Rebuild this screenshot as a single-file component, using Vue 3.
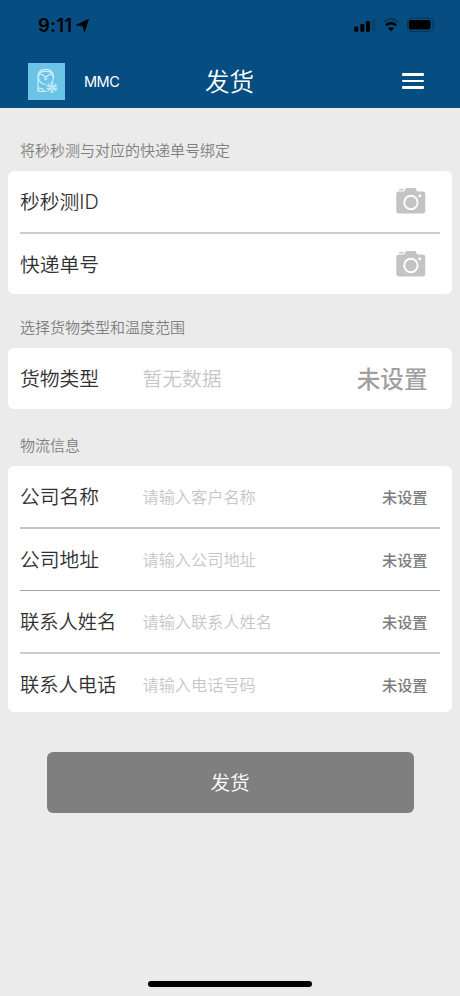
<script setup>
const scanRows = ['秒秒测ID', '快递单号']
const infoRows = [
  { label: '公司名称', hint: '请输入客户名称' },
  { label: '公司地址', hint: '请输入公司地址' },
  { label: '联系人姓名', hint: '请输入联系人姓名', long: true },
  { label: '联系人电话', hint: '请输入电话号码', long: true },
]
</script>

<template>
  <div class="screen">
    <header class="header">
      <div class="status">
        <div class="clock">
          <span class="time">9:11</span>
          <svg class="arrow" width="13" height="13" viewBox="0 0 13 13"><path d="M12.600 .3 8.600 12.700 6.700 6.900 .2 6Z" stroke="#000" stroke-width=".6" stroke-linejoin="round" /></svg>
        </div>
        <svg width="84" height="18" viewBox="0 0 84 18">
          <rect x="0.300" y="10.500" width="4" height="5.200" rx="1.200" />
          <rect x="6.300" y="8" width="4" height="7.700" rx="1" />
          <rect x="12" y="5" width="4" height="10.700" rx="1" />
          <rect x="18" y="2" width="3.600" height="13.700" rx="1" opacity=".13" />
          <path d="M29.600 6.200Q37 -.2 44.400 6.200" fill="none" stroke="#000" stroke-width="2.400" opacity=".25" />
          <path d="M31.900 9.300Q37 4.800 42.100 9.300" fill="none" stroke="#000" stroke-width="2.600" />
          <path d="M34 12.300Q37 10 40 12.300L37 15.300Z" />
          <rect x="53.500" y="2.200" width="25.500" height="13.300" rx="3.600" fill="none" stroke="#000" opacity=".3" />
          <rect x="54.800" y="4" width="21.800" height="9.500" rx="2" />
          <path d="M80.500 6.200Q82.300 8.700 80.500 11.200Z" opacity=".35" />
        </svg>
      </div>
      <div class="nav">
        <div class="brand">
          <svg class="logo" width="37" height="37" viewBox="0 0 37 37">
            <rect width="37" height="37" fill="#6bc4e5" />
            <g fill="none" stroke="#cdf0f8" stroke-width="1.200" stroke-linecap="round" stroke-linejoin="round">
              <path d="M10 27V13Q10.500 6.300 17.500 6.300 25 6.300 25.500 13.500 25.500 16.500 24.500 18.500" />
              <path d="M10.500 14Q11 10.500 14 11.500 16 12.500 17.700 14.500 19.500 12.500 21.500 11.500 24.500 10.500 25 14" />
              <path d="M11.500 10.500Q13.500 8 17.500 8.500 22 8 24 10.500M16.700 15.500 17.700 17 18.700 15.500" />
              <path d="M10.500 15Q11.500 20.500 17.500 21.500M10 26.500Q10 28.500 12.500 28.500H18.500M10.500 25.200Q14 24.500 16.500 28" />
              <path stroke-width="1" d="M23.900 19.300V29.700M19.400 21.900 28.400 27.100M19.400 27.100 28.400 21.900" />
              <circle cx="23.900" cy="24.500" r="2.600" stroke-width=".8" />
              <path stroke-width=".9" d="M22.300 19.800 23.900 21.200 25.500 19.800M22.300 29.200 23.900 27.800 25.500 29.200M19 23.500 21 23.200 20.800 21M28.800 23.500 26.800 23.200 27 21M19 25.500 21 25.800 20.800 28M28.800 25.500 26.800 25.800 27 28" />
            </g>
          </svg>
          <span class="name">MMC</span>
        </div>
        <h1 class="title">发货</h1>
        <div class="menu"><i></i><i></i><i></i></div>
      </div>
    </header>

    <main class="body">
      <p class="caption">将秒秒测与对应的快递单号绑定</p>
      <section class="card">
        <div v-for="label in scanRows" :key="label" class="row scan">
          <span class="label">{{ label }}</span>
          <svg class="camera" width="30" height="26" viewBox="0 0 30 26">
            <path fill="#c3c3c3" d="M3 1.700Q3 1 4 1H7Q8 1 8 1.700V2.200H3ZM3 3.500H7.500Q8.500 3.500 9 2L9.400 1Q9.800 0 11 0H18.500Q19.700 0 20 1L20.400 2.200Q20.800 3.500 22.200 3.500H26.500Q29.300 3.500 29.300 6.200V22.800Q29.300 25.500 26.500 25.500H3Q.3 25.500 .3 22.800V6.200Q.3 3.500 3 3.500Z" />
            <circle cx="14.900" cy="14.500" r="6.700" fill="none" stroke="#fff" stroke-width="1.900" />
            <circle cx="23.800" cy="7.800" r="1.500" fill="#fff" />
          </svg>
        </div>
      </section>

      <p class="caption">选择货物类型和温度范围</p>
      <section class="card">
        <div class="row">
          <span class="label">货物类型</span>
          <span class="hint big">暂无数据</span>
          <span class="state big">未设置</span>
        </div>
      </section>

      <p class="caption last">物流信息</p>
      <section class="card">
        <div v-for="row in infoRows" :key="row.label" class="row info">
          <span class="label" :class="{ long: row.long }">{{ row.label }}</span>
          <span class="hint">{{ row.hint }}</span>
          <span class="state">未设置</span>
        </div>
      </section>

      <button class="submit">发货</button>
    </main>
    <div class="home"></div>
  </div>
</template>

<style>
body { background: #ebebeb; }
</style>

<style scoped>
.screen {
  box-sizing: border-box;
  width: 460px;
  height: 996px;
  overflow: hidden;
  display: flex;
  flex-direction: column;
  background: #ebebeb;
  color: #303030;
  font-family: "Noto Sans CJK SC", sans-serif;
}
.header { height: 108px; flex: none; background: #064e81; }
.status {
  height: 54px;
  box-sizing: border-box;
  padding: 16px 22px 0 38px;
  display: flex;
  justify-content: space-between;
}
.clock { display: flex; gap: 4px; color: #000; height: 18px; align-items: center; }
.time { font: 600 18.500px/18px Inter, sans-serif; letter-spacing: .2px; }
.nav {
  height: 54px;
  padding: 0 36px 0 28px;
  display: grid;
  grid-template-columns: 1fr auto 1fr;
  align-items: center;
}
.brand { display: flex; align-items: center; gap: 19px; }
.logo { display: block; }
.name { font: 400 14.500px/20px Inter, sans-serif; letter-spacing: -.5px; color: #fff; padding-top: 2px; }
.title { margin: 0 0 0 7px; padding-bottom: 1px; font-size: 24.500px; line-height: 36px; font-weight: 350; color: #fff; }
.menu { justify-self: end; width: 22px; display: flex; flex-direction: column; gap: 4.300px; }
.menu i { height: 2.400px; border-radius: 1px; background: #fff; }
.body { display: flex; flex-direction: column; padding: 31px 8px 0; }
.caption { margin: 0 0 10px 12px; font-size: 15px; line-height: 22px; color: #808080; font-weight: 350; }
.card { background: #fff; border-radius: 6px; padding: 0 12px; margin-bottom: 22px; }
.row { height: 61px; display: flex; align-items: center; box-sizing: border-box; }
.scan { justify-content: space-between; }
.scan:first-child { height: 63px; border-bottom: 2px solid #cdcdcd; }
.scan:last-child { height: 60px; }
.info:nth-child(1) { height: 63px; border-bottom: 2px solid #c4c4c4; }
.info:nth-child(2) { height: 62px; border-bottom: 1px solid #a4a4a4; }
.info:nth-child(3) { height: 63px; border-bottom: 2px solid #cdcdcd; }
.info:nth-child(4) { height: 57.500px; padding-top: 3.500px; }
.label { width: 122.500px; flex: none; font-size: 19.800px; line-height: 30px; font-weight: 350; padding-top: 1px; font-family: Inter, "Noto Sans CJK SC", sans-serif; }
.label.long { font-size: 19.300px; }
.camera { margin: 0 14px 1px 0; }
.hint { flex: 1; font-size: 16.200px; line-height: 24px; padding-bottom: 2px; font-weight: 350; color: #c6c6ca; }
.hint.big { font-size: 19.800px; }
.state { margin-right: 12.500px; font-size: 15.200px; line-height: 24px; padding-bottom: 2px; font-weight: 500; color: #7c7c7c; }
.state.big { font-size: 23.600px; color: #a0a0a0; }
.caption.last { margin-top: 3px; }
.submit {
  width: 367px;
  height: 61px;
  margin: 18.500px auto 0;
  padding: 0 0 2px;
  border: 0;
  border-radius: 6px;
  background: #7f7f7f;
  color: #fff;
  font: 350 19.600px/59px "Noto Sans CJK SC", sans-serif;
}
.home { width: 164px; height: 5.500px; border-radius: 3px; background: #000; margin: auto auto 9.500px; }
</style>
